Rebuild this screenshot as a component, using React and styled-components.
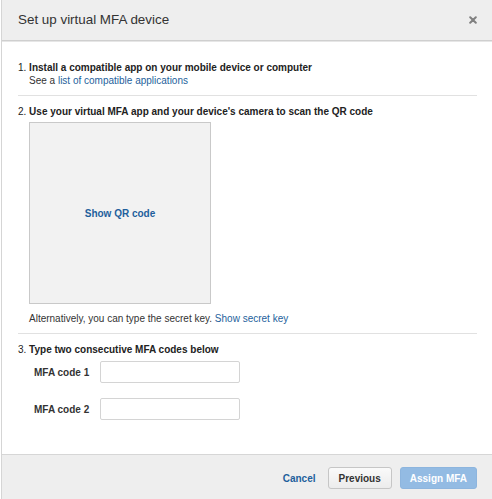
import React from 'react';
import styled, { createGlobalStyle } from 'styled-components';

const GlobalStyle = createGlobalStyle`
  html, body {
    margin: 0;
    padding: 0;
    background: #ffffff;
  }
  body {
    font-family: "Liberation Sans", Arial, sans-serif;
    color: #222;
  }
`;

function App() {
  return <>
    <GlobalStyle />
    <Modal>
      <Header>
        <Title>Set up virtual MFA device</Title>
        <Close aria-label="Close">
          <svg width="8" height="8" viewBox="0 0 8 8">
            <path d="M1.2 1.2 L6.8 6.8 M6.8 1.2 L1.2 6.8" stroke="#808080" strokeWidth="2" strokeLinecap="round" />
          </svg>
        </Close>
      </Header>

      <Body>
        <Step>
          <StepTitle><Num>1.</Num> Install a compatible app on your mobile device or computer</StepTitle>
          <StepText>See a <Link href="#">list of compatible applications</Link></StepText>
        </Step>

        <Step>
          <StepTitle><Num>2.</Num> Use your virtual MFA app and your device's camera to scan the QR code</StepTitle>
          <QrBox>
            <Link href="#">Show QR code</Link>
          </QrBox>
          <StepText>Alternatively, you can type the secret key. <Link href="#">Show secret key</Link></StepText>
        </Step>

        <Step last>
          <StepTitle><Num>3.</Num> Type two consecutive MFA codes below</StepTitle>
          <Fields>
            <FieldRow>
              <FieldLabel>MFA code 1</FieldLabel>
              <Input />
            </FieldRow>
            <FieldRow>
              <FieldLabel>MFA code 2</FieldLabel>
              <Input />
            </FieldRow>
          </Fields>
        </Step>
      </Body>

      <Footer>
        <CancelLink href="#">Cancel</CancelLink>
        <Button>Previous</Button>
        <Button primary disabled>Assign MFA</Button>
      </Footer>
    </Modal>
  </>;
}

export default App;

const Modal = styled.div`
    width: 492px;
    height: 499px;
    display: flex;
    flex-direction: column;
    border-left: 1px solid #d5d5d5;
    margin-left: 1px;
    box-sizing: border-box;
    background: #fff;
`

const Header = styled.div`
    height: 40px;
    flex: none;
    display: flex;
    align-items: center;
    justify-content: space-between;
    padding: 0 16px 0 16px;
    background: #eeeeee;
    border-bottom: 1px solid #cfcfcf;
    box-shadow: 0 1px 0 #e6e6e6;
`

const Title = styled.h1`
    margin: 0 0 1px;
    font-size: 13.4px;
    font-weight: normal;
    color: #333;
`

const Close = styled.button`
    border: none;
    background: none;
    padding: 0;
    display: flex;
    cursor: pointer;
`

const Body = styled.div`
    flex: 1;
    padding: 20px 16px 0 16px;
`

const Step = styled.div`
    padding-bottom: ${p => p.last ? '0' : '8px'};
    margin-bottom: ${p => p.last ? '0' : '9px'};
    border-bottom: ${p => p.last ? 'none' : '1px solid #e1e1e1'};
`

const StepTitle = styled.div`
    font-size: 10px;
    line-height: 13px;
    font-weight: bold;
    color: #222;
`

const Num = styled.span`
    font-weight: normal;
`

const StepText = styled.div`
    font-size: 10px;
    line-height: 13px;
    color: #333;
    margin-left: 11px;
`

const Link = styled.a`
    color: #1e5f9c;
    text-decoration: none;
`

const QrBox = styled.div`
    width: 182px;
    height: 182px;
    box-sizing: border-box;
    margin: 4px 0 8px 11px;
    background: #f2f2f2;
    border: 1px solid #c9c9c9;
    display: flex;
    align-items: center;
    justify-content: center;
    font-size: 10px;
    font-weight: bold;
`

const Fields = styled.div`
    display: flex;
    flex-direction: column;
    gap: 15px;
    margin: 5px 0 0 16px;
`

const FieldRow = styled.div`
    display: flex;
    align-items: center;
`

const FieldLabel = styled.label`
    width: 66px;
    font-size: 10px;
    font-weight: bold;
    color: #333;
`

const Input = styled.input`
    width: 140px;
    height: 22px;
    box-sizing: border-box;
    border: 1px solid #d4d4d4;
    border-radius: 2px;
    background: #fff;
    outline: none;
`

const Footer = styled.div`
    height: 42px;
    flex: none;
    display: flex;
    align-items: center;
    justify-content: flex-end;
    gap: 8px;
    padding: 2px 16px 0;
    background: #eeeeee;
    border-top: 1px solid #d6d6d6;
`

const CancelLink = styled.a`
    color: #1e5f9c;
    font-size: 10px;
    font-weight: bold;
    text-decoration: none;
    margin-right: 4px;
`

const Button = styled.button`
    height: 22px;
    padding: 0 ${p => p.primary ? '9px' : '10px'};
    font-family: "Liberation Sans", Arial, sans-serif;
    font-size: 10px;
    font-weight: bold;
    border-radius: 3px;
    color: ${p => p.primary ? '#ffffff' : '#333'};
    background: ${p => p.primary ? '#93bbe3' : 'linear-gradient(#fafafa, #ececec)'};
    border: 1px solid ${p => p.primary ? '#8db5de' : '#c6c6c6'};
    cursor: pointer;
`
